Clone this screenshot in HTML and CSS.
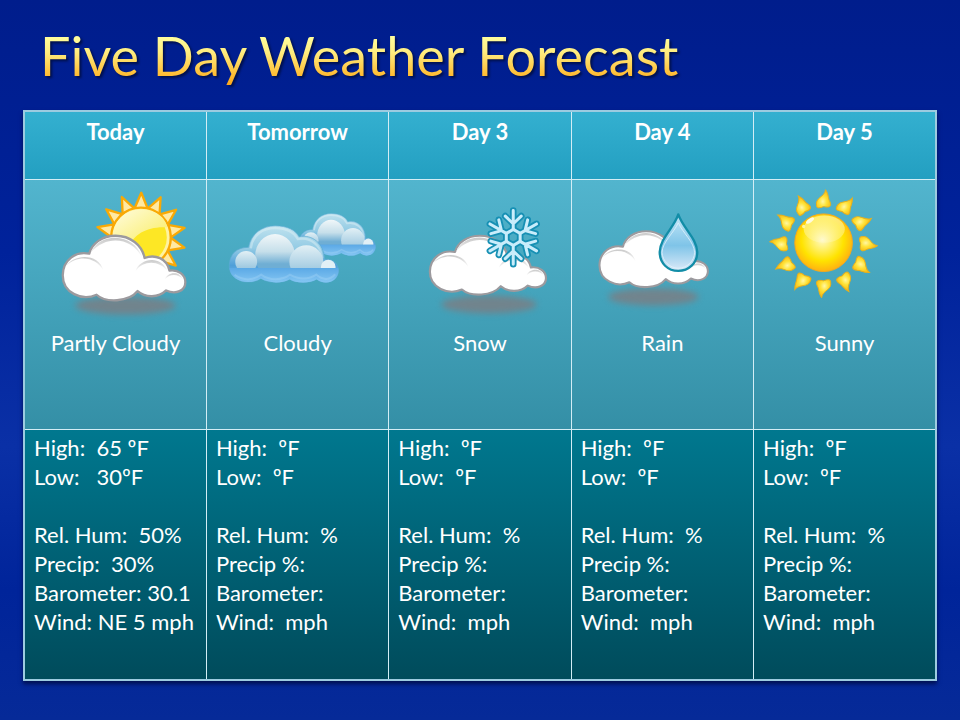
FILE: index.html
```html
<!DOCTYPE html>
<html lang="en">
<head>
<meta charset="utf-8">
<title>Five Day Weather Forecast</title>
<link rel="stylesheet" href="styles.css">
</head>
<body>
<main class="slide">
<h1 class="title">Five Day Weather Forecast</h1>
<table class="forecast">
<thead>
<tr><th scope="col">Today</th><th scope="col">Tomorrow</th><th scope="col">Day 3</th><th scope="col">Day 4</th><th scope="col">Day 5</th></tr>
</thead>
<tbody>
<tr class="sky">
<td>
<svg class="icon" viewBox="24 180 182 148" aria-hidden="true">
<defs>
<linearGradient id="arc" x1="0" y1="0" x2="0" y2="1"><stop offset="0" stop-color="#c9c9c9"/><stop offset="1" stop-color="#fff"/></linearGradient>
<filter id="soft" x="-20%" y="-50%" width="140%" height="200%"><feGaussianBlur stdDeviation="9"/></filter>
<linearGradient id="shine" x1="0" y1="0" x2="1" y2="1"><stop offset="0" stop-color="#fffce0"/><stop offset="1" stop-color="#f9ec5c"/></linearGradient>
<g id="cloud">
<path d="M116 221C124 190 155 167 195 167C240 167 275 195 283 234C315 222 350 235 358 272C385 268 406 285 406 307C406 332 378 346 348 332C325 355 285 355 262 334C235 368 165 370 138 345C95 365 35 340 36 285C37 240 75 212 116 221Z" fill="#fff" stroke="#9c9a9e" stroke-width="7" stroke-linejoin="round"/>
<path d="M120 218C132 190 160 173 195 173C235 174 268 200 277 237C255 180 175 155 120 218Z" fill="url(#arc)"/>
<path d="M47 258C65 224 145 215 159 273C140 235 85 220 47 258Z" fill="url(#arc)"/>
<path d="M255 275C266 235 333 222 352 274C328 242 281 238 255 275Z" fill="url(#arc)"/>
<path d="M344 299C350 277 388 270 399 299C385 282 360 280 344 299Z" fill="url(#arc)"/>
</g>
<path id="ray" d="M273 37L292 84H253Z" fill="#ffe9a2" stroke="#f9a905" stroke-width="7" stroke-linejoin="round"/>
</defs>
<g transform="translate(50 180) scale(.3333)">
<ellipse cx="225" cy="378" rx="152" ry="27" fill="#7d7d82" opacity=".8" filter="url(#soft)"/>
<use href="#ray"/><use href="#ray" transform="rotate(25.7 272 172)"/><use href="#ray" transform="rotate(51.4 272 172)"/><use href="#ray" transform="rotate(77.1 272 172)"/><use href="#ray" transform="rotate(102.8 272 172)"/><use href="#ray" transform="rotate(128.5 272 172)"/><use href="#ray" transform="rotate(-25.7 272 172)"/><use href="#ray" transform="rotate(-51.4 272 172)"/><use href="#ray" transform="rotate(-77.1 272 172)"/>
<circle cx="272" cy="172" r="90" fill="#fff3a0" stroke="#f9a905" stroke-width="7"/>
<circle cx="270" cy="172" r="80" fill="#fde725"/>
<path d="M187 180C185 125 222 88 272 88C316 88 347 112 351 142C290 138 250 165 240 195Z" fill="url(#shine)"/>
<use href="#cloud"/>
</g>
</svg>
<p>Partly Cloudy</p></td>
<td>
<svg class="icon" viewBox="206 180 182 148" aria-hidden="true">
<defs>
<linearGradient id="body" x1="0" y1="0" x2="0" y2="1"><stop offset="0" stop-color="#bfe2ef"/><stop offset=".4" stop-color="#93cbe4"/><stop offset=".7" stop-color="#4f9fd9"/><stop offset="1" stop-color="#78bdf2"/></linearGradient>
<linearGradient id="puff" x1="0" y1="0" x2="0" y2="1"><stop offset="0" stop-color="#f1f7f9"/><stop offset=".4" stop-color="#c6dfea"/><stop offset=".68" stop-color="#6faed4"/><stop offset="1" stop-color="#6faed4"/></linearGradient>
<linearGradient id="puff2" x1="0" y1="0" x2="0" y2="1"><stop offset="0" stop-color="#e2f0f5"/><stop offset=".7" stop-color="#a4cce2"/><stop offset="1" stop-color="#8fbfdb"/></linearGradient>
<linearGradient id="base" x1="0" y1="234" x2="0" y2="280" gradientUnits="userSpaceOnUse"><stop offset="0" stop-color="#5ba9e6"/><stop offset="1" stop-color="#86c7f3"/></linearGradient>
<clipPath id="above"><rect x="30" y="95" width="350" height="139"/></clipPath>
<clipPath id="below"><rect x="30" y="234" width="350" height="60"/></clipPath>
<path id="glass-shape" d="M98 172C105 130 140 107 178 107C215 107 240 120 250 140C290 132 325 160 327 208C350 205 369 220 369 243C367 275 330 288 303 268C280 282 240 280 222 268C195 282 160 280 135 266C100 288 40 275 40 228C40 190 65 172 98 172Z"/>
<g id="glass">
<use href="#glass-shape" fill="url(#body)" stroke="#5aaad2" stroke-width="2"/>
<path d="M105 175C110 133 142 114 178 114C213 114 237 128 246 147C285 140 316 165 320 205" fill="none" stroke="#e0f2f7" stroke-width="7" opacity=".45"/>
<g clip-path="url(#above)">
<ellipse cx="178" cy="198" rx="60" ry="66" fill="url(#puff)"/>
<ellipse cx="272" cy="216" rx="51" ry="50" fill="url(#puff2)"/>
<circle cx="91" cy="216" r="33" fill="url(#puff2)"/>
<circle cx="338" cy="231" r="22" fill="#e2f0f6"/>
</g>
<use href="#glass-shape" fill="url(#base)" clip-path="url(#below)"/>
<path d="M56 255C90 276 112 270 136 254C162 273 198 272 223 254C250 270 280 269 302 254C322 273 345 270 359 253" fill="none" stroke="#b1dcfa" stroke-width="6" opacity=".3"/>
</g>
</defs>
<g transform="translate(215 190) scale(.3333)">
<use href="#glass" transform="translate(222 -9) scale(.7 .74)"/>
<use href="#glass"/>
</g>
</svg>
<p>Cloudy</p></td>
<td>
<svg class="icon" viewBox="389 180 182 148" aria-hidden="true">
<defs>
<path id="arm" d="M281 103V46M281 86L257 63M281 86L305 63M281 103L302 115"/>
<g id="flake" fill="none" stroke-linecap="round" stroke-linejoin="round">
<use href="#arm"/><use href="#arm" transform="rotate(60 281 127)"/><use href="#arm" transform="rotate(120 281 127)"/><use href="#arm" transform="rotate(180 281 127)"/><use href="#arm" transform="rotate(240 281 127)"/><use href="#arm" transform="rotate(300 281 127)"/>
</g>
</defs>
<g transform="translate(420 195) scale(.3333)">
<ellipse cx="208" cy="329" rx="144" ry="27" fill="#7d7d82" opacity=".8" filter="url(#soft)"/>
<use href="#cloud" transform="translate(-4 -30) scale(.945 .91)"/>
<use href="#flake" stroke="#1790b4" stroke-width="20"/>
<use href="#flake" stroke="#c9edfb" stroke-width="9"/>
</g>
</svg>
<p>Snow</p></td>
<td>
<svg class="icon" viewBox="571 180 182 148" aria-hidden="true">
<defs>
<linearGradient id="water" x1="0" y1="0" x2="0" y2="1"><stop offset="0" stop-color="#c5e8f8"/><stop offset=".55" stop-color="#7fc4e8"/><stop offset="1" stop-color="#dceaf8"/></linearGradient>
</defs>
<g transform="translate(590 200) scale(.3333)">
<ellipse cx="188" cy="291" rx="136" ry="26" fill="#7d7d82" opacity=".8" filter="url(#soft)"/>
<use href="#cloud" transform="translate(-6 -51) scale(.882 .864)"/>
<path d="M263 43C250 83 208 115 207 156C207 190 232 213 263 213C294 213 320 190 320 156C319 115 276 83 263 43Z" fill="url(#water)" stroke="#128da7" stroke-width="7" stroke-linejoin="round"/>
<path d="M263 68C250 98 215 126 214 157C215 183 236 204 263 205C290 204 312 183 312 157C311 126 276 98 263 68Z" fill="none" stroke="#e2f3fb" stroke-width="3" opacity=".8"/>
</g>
</svg>
<p>Rain</p></td>
<td>
<svg class="icon" viewBox="753 180 182 148" aria-hidden="true">
<defs>
<radialGradient id="sun" cx=".48" cy=".45" r=".56"><stop offset="0" stop-color="#fff9c8"/><stop offset=".3" stop-color="#fff06a"/><stop offset=".65" stop-color="#ffe300"/><stop offset="1" stop-color="#ffae12"/></radialGradient>
<linearGradient id="gloss" x1="0" y1="0" x2="0" y2="1"><stop offset="0" stop-color="#fff4a0"/><stop offset="1" stop-color="#fffce6" stop-opacity=".3"/></linearGradient>
<radialGradient id="fire" cx=".45" cy=".65" r=".6"><stop offset="0" stop-color="#fff7a5"/><stop offset=".45" stop-color="#ffe338"/><stop offset="1" stop-color="#f8bb12"/></radialGradient>
<path id="flame" d="M168 78C162 50 192 52 195 28C206 45 201 52 208 64C215 79 206 83 189 79C177 84 169 84 168 78Z" fill="url(#fire)" stroke="#e8b01c" stroke-width="3"/>
</defs>
<g transform="translate(760 180) scale(.3333)">
<use href="#flame"/><use href="#flame" transform="rotate(30 189 191)"/><use href="#flame" transform="rotate(60 189 191)"/><use href="#flame" transform="rotate(90 189 191)"/><use href="#flame" transform="rotate(120 189 191)"/><use href="#flame" transform="rotate(150 189 191)"/><use href="#flame" transform="rotate(180 189 191)"/><use href="#flame" transform="rotate(210 189 191)"/><use href="#flame" transform="rotate(240 189 191)"/><use href="#flame" transform="rotate(270 189 191)"/><use href="#flame" transform="rotate(300 189 191)"/><use href="#flame" transform="rotate(330 189 191)"/>
<circle cx="189" cy="188" r="87" fill="url(#sun)" stroke="#f5a91b" stroke-width="3"/>
<ellipse cx="191" cy="147" rx="62" ry="41" fill="url(#gloss)" opacity=".75"/>
<ellipse cx="148" cy="121" rx="14" ry="6" fill="#fffbe0" transform="rotate(-35 148 121)"/>
<circle cx="129" cy="139" r="5" fill="#fff4a0"/>
</g>
</svg>
<p>Sunny</p></td>
</tr>
<tr class="data">
<td>
<p>High:  65 ºF</p>
<p>Low:   30ºF</p>
<p class="group">Rel. Hum:  50%</p>
<p>Precip:  30%</p>
<p>Barometer: 30.1</p>
<p>Wind: NE 5 mph</p>
</td>
<td>
<p>High:  ºF</p>
<p>Low:  ºF</p>
<p class="group">Rel. Hum:  %</p>
<p>Precip %:</p>
<p>Barometer:</p>
<p>Wind:  mph</p>
</td>
<td>
<p>High:  ºF</p>
<p>Low:  ºF</p>
<p class="group">Rel. Hum:  %</p>
<p>Precip %:</p>
<p>Barometer:</p>
<p>Wind:  mph</p>
</td>
<td>
<p>High:  ºF</p>
<p>Low:  ºF</p>
<p class="group">Rel. Hum:  %</p>
<p>Precip %:</p>
<p>Barometer:</p>
<p>Wind:  mph</p>
</td>
<td>
<p>High:  ºF</p>
<p>Low:  ºF</p>
<p class="group">Rel. Hum:  %</p>
<p>Precip %:</p>
<p>Barometer:</p>
<p>Wind:  mph</p>
</td>
</tr>
</tbody>
</table>
</main>
</body>
</html>
```
FILE: styles.css
```css
* { box-sizing: border-box; }
html { min-height: 100%; }
body {
  margin: 0;
  min-height: 100vh;
  background: linear-gradient(180deg, #001d8c 0%, #00229b 35%, #0a30a6 62%, #00249a 82%, #062a98 100%);
  color: #fff;
  font: 22px/29px Lato, "Noto Sans", sans-serif;
}
p { margin: 0; }
.slide { padding: 16px 23px 38px; }
.title {
  width: fit-content;
  margin: 0 0 14px 17px;
  font-size: 54px;
  font-weight: 400;
  line-height: 80px;
  white-space: nowrap;
  color: transparent;
  background: linear-gradient(180deg, #ffffa0 24%, #ffed80 45%, #ffb92e 76%, #ff9d10 92%);
  background-clip: text;
  -webkit-background-clip: text;
  filter: drop-shadow(2px 2px 1px #00104c);
}
.forecast {
  width: 100%;
  table-layout: fixed;
  border-collapse: collapse;
  border: 2px solid #9ccbe0;
  box-shadow: 0 3px 4px #001052;
}
th, td {
  padding: 0;
  border: 1px solid #d3edf5;
  vertical-align: top;
}
thead tr { height: 68px; background: linear-gradient(180deg, #34b0d0, #239fc1); }
th { padding-top: 5px; font-weight: 700; text-align: center; }
.sky { height: 250px; background: linear-gradient(180deg, #52b5ce, #348fa6); text-align: center; }
.icon { display: block; width: 100%; height: 148px; }
.data { height: 251px; background: linear-gradient(180deg, #00788f, #004b5b); }
.data td { padding: 3px 0 0 9px; }
.data p { white-space: pre; }
.data .group { margin-top: 29px; }
```
